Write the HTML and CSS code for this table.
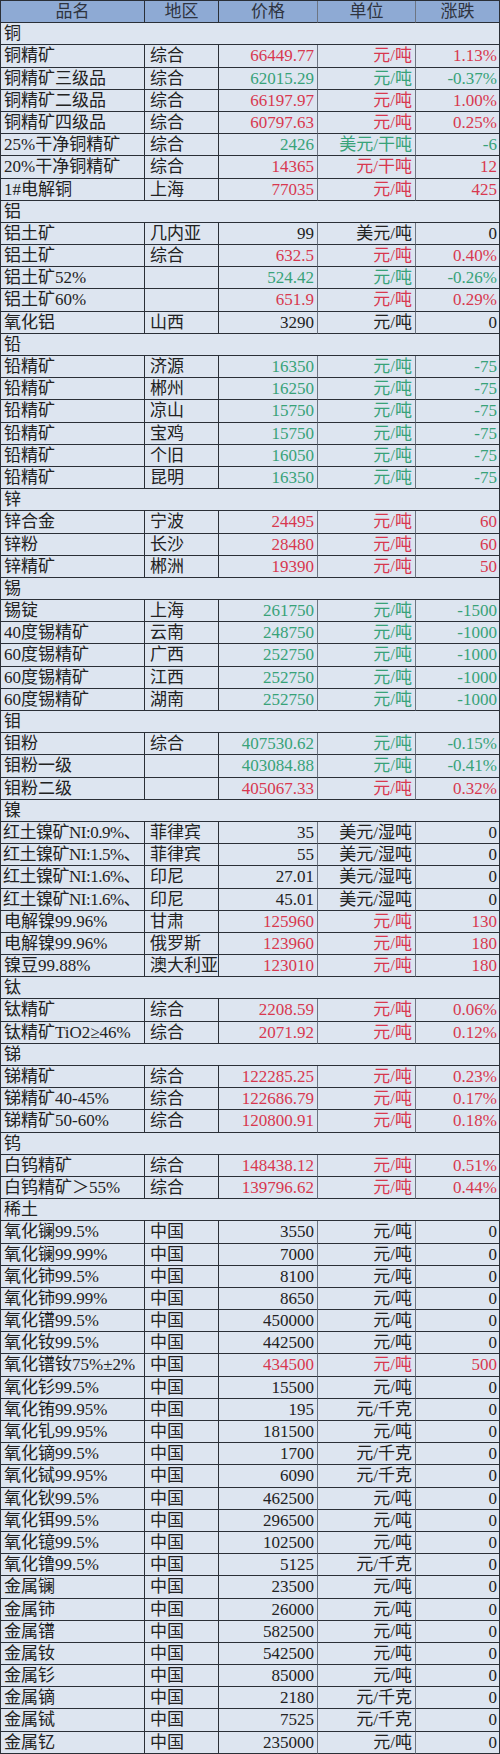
FILE: index.html
```html
<!DOCTYPE html>
<html lang="zh-CN">
<head>
<meta charset="utf-8">
<title>有色金属价格</title>
<link rel="stylesheet" href="styles.css">
</head>
<body>
<div class="sheet">
  <div class="row head"><div class="c">品名</div><div class="c">地区</div><div class="c">价格</div><div class="c">单位</div><div class="c">涨跌</div></div>

  <div class="row cat"><div class="c">铜</div></div>
  <div class="row up"><div class="c">铜精矿</div><div class="c">综合</div><div class="c n">66449.77</div><div class="c n">元/吨</div><div class="c n">1.13%</div></div>
  <div class="row dn"><div class="c">铜精矿三级品</div><div class="c">综合</div><div class="c n">62015.29</div><div class="c n">元/吨</div><div class="c n">-0.37%</div></div>
  <div class="row up"><div class="c">铜精矿二级品</div><div class="c">综合</div><div class="c n">66197.97</div><div class="c n">元/吨</div><div class="c n">1.00%</div></div>
  <div class="row up"><div class="c">铜精矿四级品</div><div class="c">综合</div><div class="c n">60797.63</div><div class="c n">元/吨</div><div class="c n">0.25%</div></div>
  <div class="row dn"><div class="c">25%干净铜精矿</div><div class="c">综合</div><div class="c n">2426</div><div class="c n">美元/干吨</div><div class="c n">-6</div></div>
  <div class="row up"><div class="c">20%干净铜精矿</div><div class="c">综合</div><div class="c n">14365</div><div class="c n">元/干吨</div><div class="c n">12</div></div>
  <div class="row up"><div class="c">1#电解铜</div><div class="c">上海</div><div class="c n">77035</div><div class="c n">元/吨</div><div class="c n">425</div></div>

  <div class="row cat"><div class="c">铝</div></div>
  <div class="row"><div class="c">铝土矿</div><div class="c">几内亚</div><div class="c n">99</div><div class="c n">美元/吨</div><div class="c n">0</div></div>
  <div class="row up"><div class="c">铝土矿</div><div class="c">综合</div><div class="c n">632.5</div><div class="c n">元/吨</div><div class="c n">0.40%</div></div>
  <div class="row dn"><div class="c">铝土矿52%</div><div class="c"></div><div class="c n">524.42</div><div class="c n">元/吨</div><div class="c n">-0.26%</div></div>
  <div class="row up"><div class="c">铝土矿60%</div><div class="c"></div><div class="c n">651.9</div><div class="c n">元/吨</div><div class="c n">0.29%</div></div>
  <div class="row"><div class="c">氧化铝</div><div class="c">山西</div><div class="c n">3290</div><div class="c n">元/吨</div><div class="c n">0</div></div>

  <div class="row cat"><div class="c">铅</div></div>
  <div class="row dn"><div class="c">铅精矿</div><div class="c">济源</div><div class="c n">16350</div><div class="c n">元/吨</div><div class="c n">-75</div></div>
  <div class="row dn"><div class="c">铅精矿</div><div class="c">郴州</div><div class="c n">16250</div><div class="c n">元/吨</div><div class="c n">-75</div></div>
  <div class="row dn"><div class="c">铅精矿</div><div class="c">凉山</div><div class="c n">15750</div><div class="c n">元/吨</div><div class="c n">-75</div></div>
  <div class="row dn"><div class="c">铅精矿</div><div class="c">宝鸡</div><div class="c n">15750</div><div class="c n">元/吨</div><div class="c n">-75</div></div>
  <div class="row dn"><div class="c">铅精矿</div><div class="c">个旧</div><div class="c n">16050</div><div class="c n">元/吨</div><div class="c n">-75</div></div>
  <div class="row dn"><div class="c">铅精矿</div><div class="c">昆明</div><div class="c n">16350</div><div class="c n">元/吨</div><div class="c n">-75</div></div>

  <div class="row cat"><div class="c">锌</div></div>
  <div class="row up"><div class="c">锌合金</div><div class="c">宁波</div><div class="c n">24495</div><div class="c n">元/吨</div><div class="c n">60</div></div>
  <div class="row up"><div class="c">锌粉</div><div class="c">长沙</div><div class="c n">28480</div><div class="c n">元/吨</div><div class="c n">60</div></div>
  <div class="row up"><div class="c">锌精矿</div><div class="c">郴洲</div><div class="c n">19390</div><div class="c n">元/吨</div><div class="c n">50</div></div>

  <div class="row cat"><div class="c">锡</div></div>
  <div class="row dn"><div class="c">锡锭</div><div class="c">上海</div><div class="c n">261750</div><div class="c n">元/吨</div><div class="c n">-1500</div></div>
  <div class="row dn"><div class="c">40度锡精矿</div><div class="c">云南</div><div class="c n">248750</div><div class="c n">元/吨</div><div class="c n">-1000</div></div>
  <div class="row dn"><div class="c">60度锡精矿</div><div class="c">广西</div><div class="c n">252750</div><div class="c n">元/吨</div><div class="c n">-1000</div></div>
  <div class="row dn"><div class="c">60度锡精矿</div><div class="c">江西</div><div class="c n">252750</div><div class="c n">元/吨</div><div class="c n">-1000</div></div>
  <div class="row dn"><div class="c">60度锡精矿</div><div class="c">湖南</div><div class="c n">252750</div><div class="c n">元/吨</div><div class="c n">-1000</div></div>

  <div class="row cat"><div class="c">钼</div></div>
  <div class="row dn"><div class="c">钼粉</div><div class="c">综合</div><div class="c n">407530.62</div><div class="c n">元/吨</div><div class="c n">-0.15%</div></div>
  <div class="row dn"><div class="c">钼粉一级</div><div class="c"></div><div class="c n">403084.88</div><div class="c n">元/吨</div><div class="c n">-0.41%</div></div>
  <div class="row up"><div class="c">钼粉二级</div><div class="c"></div><div class="c n">405067.33</div><div class="c n">元/吨</div><div class="c n">0.32%</div></div>

  <div class="row cat"><div class="c">镍</div></div>
  <div class="row"><div class="c tight">红土镍矿NI:0.9%、</div><div class="c">菲律宾</div><div class="c n">35</div><div class="c n">美元/湿吨</div><div class="c n">0</div></div>
  <div class="row"><div class="c tight">红土镍矿NI:1.5%、</div><div class="c">菲律宾</div><div class="c n">55</div><div class="c n">美元/湿吨</div><div class="c n">0</div></div>
  <div class="row"><div class="c tight">红土镍矿NI:1.6%、</div><div class="c">印尼</div><div class="c n">27.01</div><div class="c n">美元/湿吨</div><div class="c n">0</div></div>
  <div class="row"><div class="c tight">红土镍矿NI:1.6%、</div><div class="c">印尼</div><div class="c n">45.01</div><div class="c n">美元/湿吨</div><div class="c n">0</div></div>
  <div class="row up"><div class="c">电解镍99.96%</div><div class="c">甘肃</div><div class="c n">125960</div><div class="c n">元/吨</div><div class="c n">130</div></div>
  <div class="row up"><div class="c">电解镍99.96%</div><div class="c">俄罗斯</div><div class="c n">123960</div><div class="c n">元/吨</div><div class="c n">180</div></div>
  <div class="row up"><div class="c">镍豆99.88%</div><div class="c">澳大利亚</div><div class="c n">123010</div><div class="c n">元/吨</div><div class="c n">180</div></div>

  <div class="row cat"><div class="c">钛</div></div>
  <div class="row up"><div class="c">钛精矿</div><div class="c">综合</div><div class="c n">2208.59</div><div class="c n">元/吨</div><div class="c n">0.06%</div></div>
  <div class="row up"><div class="c">钛精矿TiO2≥46%</div><div class="c">综合</div><div class="c n">2071.92</div><div class="c n">元/吨</div><div class="c n">0.12%</div></div>

  <div class="row cat"><div class="c">锑</div></div>
  <div class="row up"><div class="c">锑精矿</div><div class="c">综合</div><div class="c n">122285.25</div><div class="c n">元/吨</div><div class="c n">0.23%</div></div>
  <div class="row up"><div class="c">锑精矿40-45%</div><div class="c">综合</div><div class="c n">122686.79</div><div class="c n">元/吨</div><div class="c n">0.17%</div></div>
  <div class="row up"><div class="c">锑精矿50-60%</div><div class="c">综合</div><div class="c n">120800.91</div><div class="c n">元/吨</div><div class="c n">0.18%</div></div>

  <div class="row cat"><div class="c">钨</div></div>
  <div class="row up"><div class="c">白钨精矿</div><div class="c">综合</div><div class="c n">148438.12</div><div class="c n">元/吨</div><div class="c n">0.51%</div></div>
  <div class="row up"><div class="c">白钨精矿＞55%</div><div class="c">综合</div><div class="c n">139796.62</div><div class="c n">元/吨</div><div class="c n">0.44%</div></div>

  <div class="row cat"><div class="c">稀土</div></div>
  <div class="row"><div class="c">氧化镧99.5%</div><div class="c">中国</div><div class="c n">3550</div><div class="c n">元/吨</div><div class="c n">0</div></div>
  <div class="row"><div class="c">氧化镧99.99%</div><div class="c">中国</div><div class="c n">7000</div><div class="c n">元/吨</div><div class="c n">0</div></div>
  <div class="row"><div class="c">氧化铈99.5%</div><div class="c">中国</div><div class="c n">8100</div><div class="c n">元/吨</div><div class="c n">0</div></div>
  <div class="row"><div class="c">氧化铈99.99%</div><div class="c">中国</div><div class="c n">8650</div><div class="c n">元/吨</div><div class="c n">0</div></div>
  <div class="row"><div class="c">氧化镨99.5%</div><div class="c">中国</div><div class="c n">450000</div><div class="c n">元/吨</div><div class="c n">0</div></div>
  <div class="row"><div class="c">氧化钕99.5%</div><div class="c">中国</div><div class="c n">442500</div><div class="c n">元/吨</div><div class="c n">0</div></div>
  <div class="row up"><div class="c">氧化镨钕75%±2%</div><div class="c">中国</div><div class="c n">434500</div><div class="c n">元/吨</div><div class="c n">500</div></div>
  <div class="row"><div class="c">氧化钐99.5%</div><div class="c">中国</div><div class="c n">15500</div><div class="c n">元/吨</div><div class="c n">0</div></div>
  <div class="row"><div class="c">氧化铕99.95%</div><div class="c">中国</div><div class="c n">195</div><div class="c n">元/千克</div><div class="c n">0</div></div>
  <div class="row"><div class="c">氧化钆99.95%</div><div class="c">中国</div><div class="c n">181500</div><div class="c n">元/吨</div><div class="c n">0</div></div>
  <div class="row"><div class="c">氧化镝99.5%</div><div class="c">中国</div><div class="c n">1700</div><div class="c n">元/千克</div><div class="c n">0</div></div>
  <div class="row"><div class="c">氧化铽99.95%</div><div class="c">中国</div><div class="c n">6090</div><div class="c n">元/千克</div><div class="c n">0</div></div>
  <div class="row"><div class="c">氧化钬99.5%</div><div class="c">中国</div><div class="c n">462500</div><div class="c n">元/吨</div><div class="c n">0</div></div>
  <div class="row"><div class="c">氧化铒99.5%</div><div class="c">中国</div><div class="c n">296500</div><div class="c n">元/吨</div><div class="c n">0</div></div>
  <div class="row"><div class="c">氧化镱99.5%</div><div class="c">中国</div><div class="c n">102500</div><div class="c n">元/吨</div><div class="c n">0</div></div>
  <div class="row"><div class="c">氧化镥99.5%</div><div class="c">中国</div><div class="c n">5125</div><div class="c n">元/千克</div><div class="c n">0</div></div>
  <div class="row"><div class="c">金属镧</div><div class="c">中国</div><div class="c n">23500</div><div class="c n">元/吨</div><div class="c n">0</div></div>
  <div class="row"><div class="c">金属铈</div><div class="c">中国</div><div class="c n">26000</div><div class="c n">元/吨</div><div class="c n">0</div></div>
  <div class="row"><div class="c">金属镨</div><div class="c">中国</div><div class="c n">582500</div><div class="c n">元/吨</div><div class="c n">0</div></div>
  <div class="row"><div class="c">金属钕</div><div class="c">中国</div><div class="c n">542500</div><div class="c n">元/吨</div><div class="c n">0</div></div>
  <div class="row"><div class="c">金属钐</div><div class="c">中国</div><div class="c n">85000</div><div class="c n">元/吨</div><div class="c n">0</div></div>
  <div class="row"><div class="c">金属镝</div><div class="c">中国</div><div class="c n">2180</div><div class="c n">元/千克</div><div class="c n">0</div></div>
  <div class="row"><div class="c">金属铽</div><div class="c">中国</div><div class="c n">7525</div><div class="c n">元/千克</div><div class="c n">0</div></div>
  <div class="row"><div class="c">金属钇</div><div class="c">中国</div><div class="c n">235000</div><div class="c n">元/吨</div><div class="c n">0</div></div>
</div>
</body>
</html>
```

FILE: styles.css
```css
html, body {
  margin: 0;
  padding: 0;
  background: #dde5f0;
}

.sheet {
  width: 500px;
  box-sizing: border-box;
  border-top: 1px solid #2a2f37;
  border-left: 1px solid #2a2f37;
  display: flex;
  flex-direction: column;
  font-family: "Liberation Serif", "Noto Sans CJK SC", serif;
  font-size: 17px;
  color: #222222;
  background: #dde5f0;
}

.row {
  display: grid;
  grid-template-columns: 144px 74px 99px 98px 84px;
  height: calc(1753px / 79);
}

.c {
  box-sizing: border-box;
  border-right: 1px solid #2a2f37;
  border-bottom: 1px solid #2a2f37;
  padding: 0 0 0 3px;
  line-height: 22px;
  white-space: nowrap;
  overflow: hidden;
}

.c.tight {
  padding-left: 2px;
  letter-spacing: -0.5px;
}

.c:nth-child(2) {
  padding-left: 5px;
}

.c:nth-child(3),
.c:nth-child(4) {
  border-right-color: #6d7582;
}

.c.n {
  text-align: right;
  padding: 0 3px 0 0;
}

.c:nth-child(5).n {
  padding-right: 2px;
}

.head {
  background: #8eaad4;
}

.head .c {
  text-align: center;
  padding: 0;
  color: #2e3440;
}

.cat .c {
  grid-column: 1 / -1;
  border-right-color: #2a2f37;
}

.up .n {
  color: #d8384f;
}

.dn .n {
  color: #38a279;
}
```
